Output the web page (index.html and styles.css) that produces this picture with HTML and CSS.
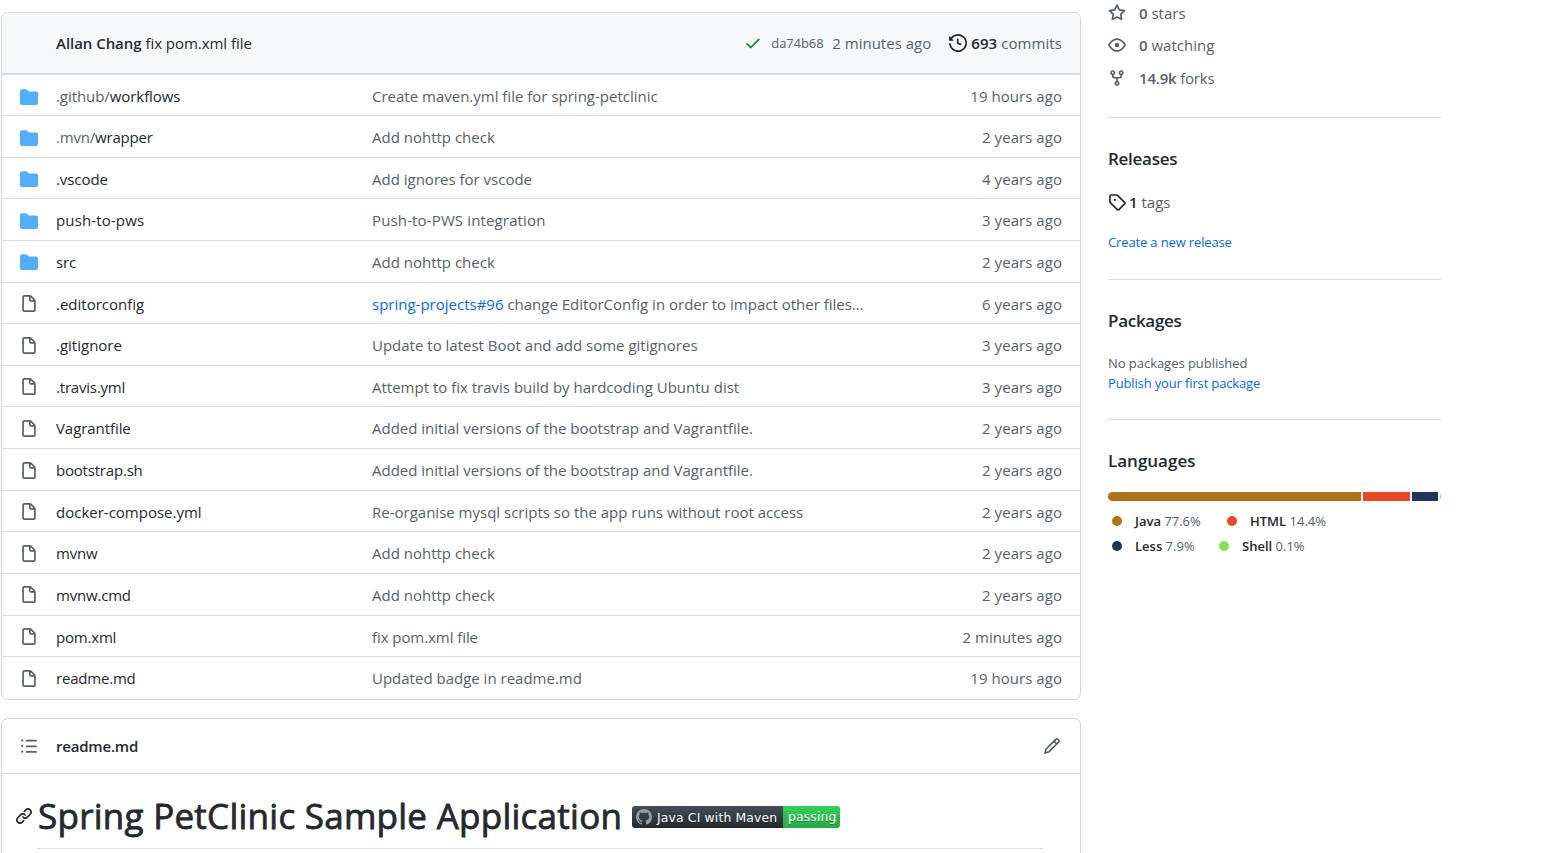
FILE: index.html
```html
<!DOCTYPE html>
<html lang="en">
<head>
<meta charset="utf-8">
<title>spring-petclinic</title>
<link rel="stylesheet" href="styles.css">
</head>
<body>
<svg class="defs" aria-hidden="true">
  <symbol id="folder" viewBox="0 0 16 16"><path d="M1.75 1A1.75 1.75 0 0 0 0 2.75v10.5C0 14.216.784 15 1.75 15h12.5A1.75 1.75 0 0 0 16 13.25v-8.5A1.75 1.75 0 0 0 14.25 3h-6.5a.25.25 0 0 1-.2-.1l-.9-1.2c-.33-.44-.85-.7-1.4-.7h-3.5Z"/></symbol>
  <symbol id="file" viewBox="0 0 16 16"><path fill-rule="evenodd" d="M3.75 1.5a.25.25 0 0 0-.25.25v11.5c0 .138.112.25.25.25h8.5a.25.25 0 0 0 .25-.25V6H9.75A1.75 1.75 0 0 1 8 4.25V1.5H3.75Zm5.75.56v2.19c0 .138.112.25.25.25h2.19L9.5 2.06ZM2 1.75C2 .784 2.784 0 3.75 0h5.086c.464 0 .909.184 1.237.513l3.414 3.414c.329.328.513.773.513 1.237v8.086A1.75 1.75 0 0 1 12.25 15h-8.5A1.75 1.75 0 0 1 2 13.25V1.75Z"/></symbol>
</svg>
<main class="page">
  <div class="main-col">
    <section class="files">
      <header class="commit">
        <div class="commit-msg"><b>Allan Chang</b> fix pom.xml file</div>
        <svg class="icon check" viewBox="0 0 16 16"><path d="M13.78 4.22a.75.75 0 0 1 0 1.06l-7.25 7.25a.75.75 0 0 1-1.06 0L2.22 9.28a.75.75 0 0 1 1.06-1.06L6 10.94l6.72-6.72a.75.75 0 0 1 1.06 0Z"/></svg>
        <span class="sha">da74b68</span>
        <span class="when">2 minutes ago</span>
        <svg class="icon history" viewBox="0 0 16 16"><path d="m.427 1.927 1.215 1.215a8.002 8.002 0 1 1-1.6 5.685.75.75 0 1 1 1.493-.154 6.5 6.5 0 1 0 1.18-4.458l1.358 1.358A.25.25 0 0 1 3.896 6H.25A.25.25 0 0 1 0 5.75V2.104a.25.25 0 0 1 .427-.177ZM7.75 4a.75.75 0 0 1 .75.75v2.992l2.028.812a.75.75 0 0 1-.557 1.392l-2.5-1A.751.751 0 0 1 7 8.25v-3.5A.75.75 0 0 1 7.75 4Z"/></svg>
        <span class="commits"><b>693</b> commits</span>
      </header>
      <div class="row"><svg class="icon folder"><use href="#folder"/></svg><span class="name snug"><i>.github/</i>workflows</span><span class="msg">Create maven.yml file for spring-petclinic</span><span class="age">19 hours ago</span></div>
      <div class="row"><svg class="icon folder"><use href="#folder"/></svg><span class="name tight"><i>.mvn/</i>wrapper</span><span class="msg">Add nohttp check</span><span class="age">2 years ago</span></div>
      <div class="row"><svg class="icon folder"><use href="#folder"/></svg><span class="name snug">.vscode</span><span class="msg">Add ignores for vscode</span><span class="age">4 years ago</span></div>
      <div class="row"><svg class="icon folder"><use href="#folder"/></svg><span class="name wide">push-to-pws</span><span class="msg wide">Push-to-PWS integration</span><span class="age">3 years ago</span></div>
      <div class="row"><svg class="icon folder"><use href="#folder"/></svg><span class="name tight">src</span><span class="msg">Add nohttp check</span><span class="age">2 years ago</span></div>
      <div class="row"><svg class="icon"><use href="#file"/></svg><span class="name">.editorconfig</span><span class="msg"><a>spring-projects#96</a> change EditorConfig in order to impact other files…</span><span class="age">6 years ago</span></div>
      <div class="row"><svg class="icon"><use href="#file"/></svg><span class="name">.gitignore</span><span class="msg">Update to latest Boot and add some gitignores</span><span class="age">3 years ago</span></div>
      <div class="row"><svg class="icon"><use href="#file"/></svg><span class="name tight">.travis.yml</span><span class="msg">Attempt to fix travis build by hardcoding Ubuntu dist</span><span class="age">3 years ago</span></div>
      <div class="row"><svg class="icon"><use href="#file"/></svg><span class="name snug">Vagrantfile</span><span class="msg">Added initial versions of the bootstrap and Vagrantfile.</span><span class="age">2 years ago</span></div>
      <div class="row"><svg class="icon"><use href="#file"/></svg><span class="name tight">bootstrap.sh</span><span class="msg">Added initial versions of the bootstrap and Vagrantfile.</span><span class="age">2 years ago</span></div>
      <div class="row"><svg class="icon"><use href="#file"/></svg><span class="name">docker-compose.yml</span><span class="msg">Re-organise mysql scripts so the app runs without root access</span><span class="age">2 years ago</span></div>
      <div class="row"><svg class="icon"><use href="#file"/></svg><span class="name tight">mvnw</span><span class="msg">Add nohttp check</span><span class="age">2 years ago</span></div>
      <div class="row"><svg class="icon"><use href="#file"/></svg><span class="name tight">mvnw.cmd</span><span class="msg">Add nohttp check</span><span class="age">2 years ago</span></div>
      <div class="row"><svg class="icon"><use href="#file"/></svg><span class="name tight">pom.xml</span><span class="msg snug">fix pom.xml file</span><span class="age">2 minutes ago</span></div>
      <div class="row"><svg class="icon"><use href="#file"/></svg><span class="name tight">readme.md</span><span class="msg">Updated badge in readme.md</span><span class="age">19 hours ago</span></div>
    </section>
    <section class="readme">
      <header class="readme-head">
        <svg class="icon" viewBox="0 0 16 16"><path d="M5.75 2.5h8.5a.75.75 0 0 1 0 1.5h-8.5a.75.75 0 0 1 0-1.5Zm0 5h8.5a.75.75 0 0 1 0 1.5h-8.5a.75.75 0 0 1 0-1.5Zm0 5h8.5a.75.75 0 0 1 0 1.5h-8.5a.75.75 0 0 1 0-1.5ZM2 14a1 1 0 1 1 0-2 1 1 0 0 1 0 2Zm1-6a1 1 0 1 1-2 0 1 1 0 0 1 2 0ZM2 4a1 1 0 1 1 0-2 1 1 0 0 1 0 2Z"/></svg>
        <b class="tight">readme.md</b>
        <svg class="icon pencil" viewBox="0 0 16 16"><path d="M11.013 1.427a1.75 1.75 0 0 1 2.474 0l1.086 1.086a1.75 1.75 0 0 1 0 2.474l-8.61 8.61c-.21.21-.47.364-.756.445l-3.251.93a.75.75 0 0 1-.927-.928l.929-3.25c.081-.286.235-.547.445-.758l8.61-8.61Zm.176 4.823L9.75 4.81l-6.286 6.287a.253.253 0 0 0-.064.108l-.558 1.953 1.953-.558a.253.253 0 0 0 .108-.064Zm1.238-3.763a.25.25 0 0 0-.354 0L10.811 3.75l1.439 1.44 1.263-1.263a.25.25 0 0 0 0-.354Z"/></svg>
      </header>
      <div class="title">
        <svg class="icon link" viewBox="0 0 16 16"><path d="m7.775 3.275 1.25-1.25a3.5 3.5 0 1 1 4.95 4.95l-2.5 2.5a3.5 3.5 0 0 1-4.95 0 .751.751 0 0 1 .018-1.042.751.751 0 0 1 1.042-.018 1.998 1.998 0 0 0 2.83 0l2.5-2.5a2.002 2.002 0 0 0-2.83-2.83l-1.25 1.25a.751.751 0 0 1-1.042-.018.751.751 0 0 1-.018-1.042Zm-4.69 9.64a1.998 1.998 0 0 0 2.83 0l1.25-1.25a.751.751 0 0 1 1.042.018.751.751 0 0 1 .018 1.042l-1.25 1.25a3.5 3.5 0 1 1-4.95-4.95l2.5-2.5a3.5 3.5 0 0 1 4.95 0 .751.751 0 0 1-.018 1.042.751.751 0 0 1-1.042.018 1.998 1.998 0 0 0-2.83 0l-2.5 2.5a1.998 1.998 0 0 0 0 2.83Z"/></svg>
        <h1>Spring PetClinic Sample Application</h1>
        <span class="badge"><span class="badge-l"><svg class="cat" viewBox="0 0 16 16"><path d="M8 0C3.58 0 0 3.58 0 8c0 3.54 2.29 6.53 5.47 7.59.4.07.55-.17.55-.38 0-.19-.01-.82-.01-1.49-2.01.37-2.53-.49-2.69-.94-.09-.23-.48-.94-.82-1.13-.28-.15-.68-.52-.01-.53.63-.01 1.08.58 1.23.82.72 1.21 1.87.87 2.33.66.07-.52.28-.87.51-1.07-1.78-.2-3.64-.89-3.64-3.95 0-.87.31-1.59.82-2.15-.08-.2-.36-1.02.08-2.12 0 0 .67-.21 2.2.82.64-.18 1.32-.27 2-.27s1.36.09 2 .27c1.53-1.04 2.2-.82 2.2-.82.44 1.1.16 1.92.08 2.12.51.56.82 1.27.82 2.15 0 3.07-1.87 3.75-3.65 3.95.29.25.54.73.54 1.48 0 1.07-.01 1.93-.01 2.2 0 .21.15.46.55.38A8.01 8.01 0 0 0 16 8c0-4.42-3.58-8-8-8Z"/></svg><span>Java CI with Maven</span></span><span class="badge-r"><span>passing</span></span></span>
      </div>
    </section>
  </div>
  <aside class="side">
    <div class="stats">
      <div class="stat"><svg class="icon" viewBox="0 0 16 16"><path d="M8 .25a.75.75 0 0 1 .673.418l1.882 3.815 4.21.612a.75.75 0 0 1 .416 1.279l-3.046 2.97.719 4.192a.751.751 0 0 1-1.088.791L8 12.347l-3.766 1.98a.75.75 0 0 1-1.088-.79l.72-4.194L.818 6.374a.75.75 0 0 1 .416-1.28l4.21-.611L7.327.668A.75.75 0 0 1 8 .25Zm0 2.445L6.615 5.5a.75.75 0 0 1-.564.41l-3.097.45 2.24 2.184a.75.75 0 0 1 .216.664l-.528 3.084 2.769-1.456a.75.75 0 0 1 .698 0l2.77 1.456-.53-3.084a.75.75 0 0 1 .216-.664l2.24-2.183-3.096-.45a.75.75 0 0 1-.564-.41L8 2.694Z"/></svg><span><b>0</b> stars</span></div>
      <div class="stat"><svg class="icon" viewBox="0 0 16 16"><path d="M8 2c1.981 0 3.671.992 4.933 2.078 1.27 1.091 2.187 2.345 2.637 3.023a1.62 1.62 0 0 1 0 1.798c-.45.678-1.367 1.932-2.637 3.023C11.67 13.008 9.981 14 8 14c-1.981 0-3.671-.992-4.933-2.078C1.797 10.83.88 9.576.43 8.898a1.62 1.62 0 0 1 0-1.798c.45-.677 1.367-1.931 2.637-3.022C4.33 2.992 6.019 2 8 2ZM1.679 7.932a.12.12 0 0 0 0 .136c.411.622 1.241 1.75 2.366 2.717C5.176 11.758 6.527 12.5 8 12.5c1.473 0 2.825-.742 3.955-1.715 1.124-.967 1.954-2.096 2.366-2.717a.12.12 0 0 0 0-.136c-.412-.621-1.242-1.75-2.366-2.717C10.824 4.242 9.473 3.5 8 3.5c-1.473 0-2.825.742-3.955 1.715-1.124.967-1.954 2.096-2.366 2.717ZM8 10a2 2 0 1 1-.001-3.999A2 2 0 0 1 8 10Z"/></svg><span><b>0</b> watching</span></div>
      <div class="stat tight"><svg class="icon" viewBox="0 0 16 16"><path d="M5 5.372v.878c0 .414.336.75.75.75h4.5a.75.75 0 0 0 .75-.75v-.878a2.25 2.25 0 1 1 1.5 0v.878a2.25 2.25 0 0 1-2.25 2.25h-1.5v2.128a2.251 2.251 0 1 1-1.5 0V8.5h-1.5A2.25 2.25 0 0 1 3.5 6.25v-.878a2.25 2.25 0 1 1 1.5 0ZM5 3.25a.75.75 0 1 0-1.5 0 .75.75 0 0 0 1.5 0Zm6.75.75a.75.75 0 1 0 0-1.5.75.75 0 0 0 0 1.5Zm-3 8.75a.75.75 0 1 0-1.5 0 .75.75 0 0 0 1.5 0Z"/></svg><span><b>14.9k</b> forks</span></div>
    </div>
    <section class="block releases">
      <h2>Releases</h2>
      <div class="tags"><svg class="icon" viewBox="0 0 16 16"><path d="M1 7.775V2.75C1 1.784 1.784 1 2.75 1h5.025c.464 0 .91.184 1.238.513l6.25 6.25a1.75 1.75 0 0 1 0 2.474l-5.026 5.026a1.75 1.75 0 0 1-2.474 0l-6.25-6.25A1.752 1.752 0 0 1 1 7.775Zm1.5 0c0 .066.026.13.073.177l6.25 6.25a.25.25 0 0 0 .354 0l5.025-5.025a.25.25 0 0 0 0-.354l-6.25-6.25a.25.25 0 0 0-.177-.073H2.75a.25.25 0 0 0-.25.25ZM6 5a1 1 0 1 1 0 2 1 1 0 0 1 0-2Z"/></svg><span><b>1</b> tags</span></div>
      <a class="small">Create a new release</a>
    </section>
    <section class="block packages">
      <h2>Packages</h2>
      <p class="small">No packages published</p>
      <a class="small">Publish your first package</a>
    </section>
    <section class="block languages">
      <h2>Languages</h2>
      <div class="bar"><i class="java"></i><i class="html"></i><i class="less"></i><i class="shell"></i></div>
      <div class="legend"><span class="lang l1"><i class="java"></i><b>Java</b> 77.6%</span><span class="lang l2"><i class="html"></i><b>HTML</b> 14.4%</span></div>
      <div class="legend"><span class="lang l3"><i class="less"></i><b>Less</b> 7.9%</span><span class="lang l4"><i class="shell"></i><b>Shell</b> 0.1%</span></div>
    </section>
  </aside>
</main>
</body>
</html>
```
FILE: styles.css
```css
* { box-sizing: border-box; }
body {
  margin: 0;
  height: 853px;
  overflow: hidden;
  background: #fff;
  color: #24292f;
  font: 15px/24px "Open Sans", "Noto Sans", sans-serif;
  white-space: nowrap;
}
b, h2 { font-weight: 600; }
i { font-style: normal; }
a { color: #0969da; }
.defs { position: absolute; width: 0; height: 0; }
.icon { width: 18px; height: 18px; flex: none; fill: #57606a; }
.snug { letter-spacing: -.07px; }
.tight { letter-spacing: -.2px; }
.wide { letter-spacing: .14px; }
.page { display: flex; gap: 27px; height: 853px; padding-left: 1px; overflow: hidden; }
.main-col { display: flex; flex-direction: column; gap: 18px; width: 1080px; flex: none; padding-top: 12px; }

.files, .readme { border: 1px solid #d0d7de; border-radius: 7px; overflow: hidden; }
.files { height: 688px; flex: none; }
.commit {
  display: flex;
  align-items: center;
  height: 61px;
  padding: 0 18px 0 54px;
  background: #f6f8fa;
  border-bottom: 1px solid #d0d7de;
}
.commit-msg { flex: 1; letter-spacing: -.04px; }
.check { fill: #1a7f37; margin-right: 9px; }
.sha { width: 61px; font-size: 13px; color: #57606a; letter-spacing: -.1px; }
.when { width: 117px; color: #57606a; }
.history { fill: #24292f; margin-right: 4px; }
.commits { color: #57606a; letter-spacing: .07px; }
.commits b { color: #24292f; }

.row {
  display: grid;
  grid-template-columns: 36px 316px 1fr auto;
  align-items: center;
  height: 41.625px;
  padding: 1.5px 18px 0;
  border-top: 1px solid #d8dee4;
  color: #57606a;
}
.commit + .row { height: 41.05px; padding-top: 2px; }
.row .icon { margin-top: 1px; }
.name { color: #24292f; }
.name i { color: #57606a; }
.folder { fill: #54aeff; }
.age { letter-spacing: .05px; }

.readme { flex: 1; border-bottom: 0; border-radius: 7px 7px 0 0; }
.readme-head {
  display: flex;
  align-items: center;
  gap: 18px;
  height: 55px;
  padding: 0 19px 0 18px;
  border-bottom: 1px solid #d0d7de;
}
.pencil { margin-left: auto; }
.title {
  display: flex;
  align-items: center;
  height: 75px;
  margin: 0 37px 0 13px;
  padding-top: 12px;
  border-bottom: 1px solid #d8dee4;
  border-image: linear-gradient(90deg, transparent 23px, #d8dee4 23px) 1;
}
.link { fill: #24292f; margin: -2px 5px 0 0; }
h1 {
  margin: -2px 0 0;
  width: 594px;
  font-size: 35px;
  font-weight: 400;
  line-height: 44px;
  letter-spacing: .26px;
  -webkit-text-stroke: .8px #24292f;
}
.badge {
  display: flex;
  width: 208px;
  height: 22px;
  border-radius: 3px;
  overflow: hidden;
  color: #fff;
  font: 12.4px/21px "DejaVu Sans", sans-serif;
  letter-spacing: .15px;
  text-shadow: 0 1px 0 rgba(1, 1, 1, .3);
}
.badge-l { display: flex; align-items: center; gap: 5px; width: 151px; padding-left: 4px; background: linear-gradient(#444d56, #24292e); }
.badge-r { width: 57px; padding-left: 5px; background: linear-gradient(#34d058, #28a745); }
.cat { width: 16px; height: 16px; fill: #959da5; }

.side { width: 333px; }
.stats { display: flex; flex-direction: column; gap: 8.3px; height: 117px; padding-top: 1px; color: #57606a; }
.stat { display: flex; align-items: center; gap: 13px; }
.block { border-top: 1px solid #d8dee4; padding-top: 27px; }
h2 { margin: 0; font-size: 17px; line-height: 27px; letter-spacing: -.28px; }
.small { display: block; margin: 0; font-size: 13px; line-height: 20px; letter-spacing: -.14px; }
.releases { height: 162px; }
.tags { display: flex; align-items: center; gap: 3px; margin-top: 18px; color: #57606a; }
.tags .icon { fill: #24292f; }
.tags b { color: #24292f; }
.tags + .small { margin-top: 18px; }
.packages { height: 140px; }
.packages p { margin-top: 19px; color: #57606a; letter-spacing: -.04px; }
.languages h2 { letter-spacing: 0; }
.bar { display: flex; gap: 2px; height: 9px; margin: 18px 0 8px; border-radius: 5px; overflow: hidden; }
.java { background: #b07219; }
.html { background: #e34c26; }
.less { background: #1d365d; }
.shell { background: #89e051; }
.bar .java { width: 253px; }
.bar .html { width: 47px; }
.bar .less { width: 26px; }
.bar .shell { width: 1px; }
.legend { display: flex; height: 25px; padding-left: 4px; color: #57606a; font-size: 13px; line-height: 25px; }
.lang b { color: #24292f; }
.lang i { display: inline-block; width: 10px; height: 10px; margin-right: 13px; border-radius: 50%; }
.l1 { width: 115px; }
.l3 { width: 107px; }
```
